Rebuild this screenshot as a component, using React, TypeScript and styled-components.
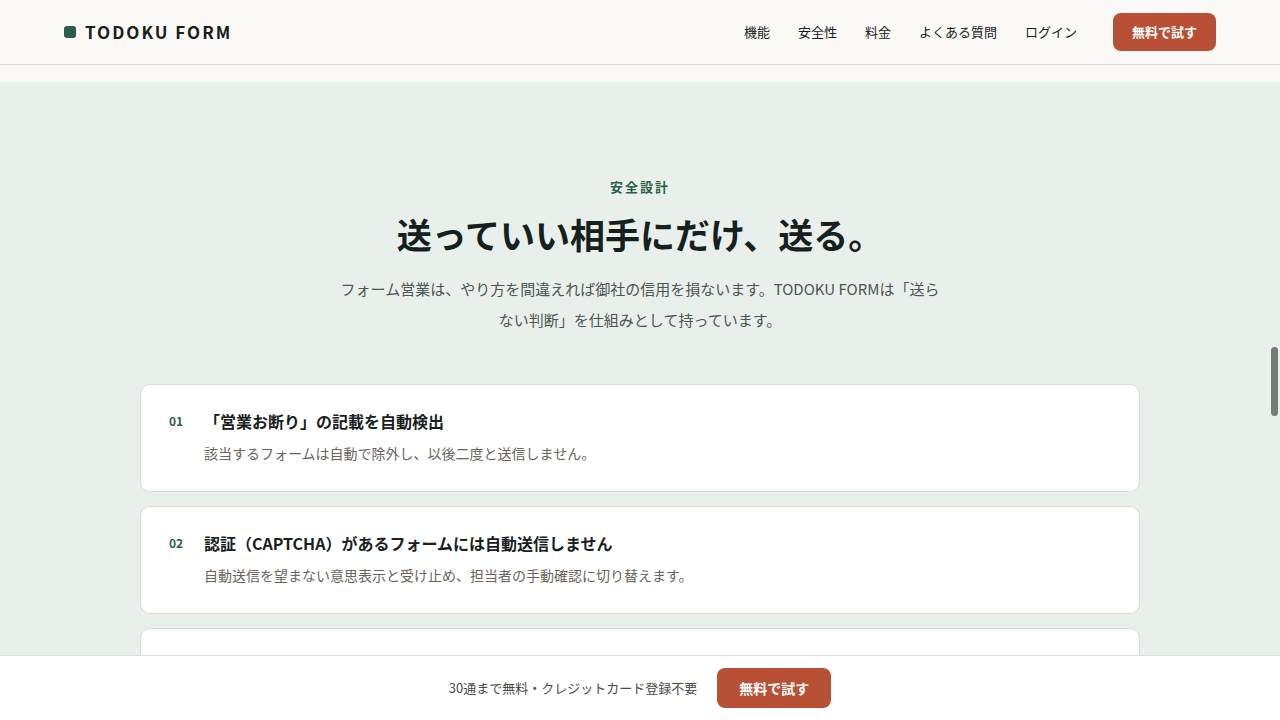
import React from "react";
import styled, { createGlobalStyle } from "styled-components";

const color = {
  paper: "#fbf9f5",
  mint: "#e9f0eb",
  white: "#ffffff",
  ink: "#16211d",
  green: "#2d5e4a",
  lead: "#4a5650",
  muted: "#6b645c",
  note: "#4b4a44",
  accent: "#b85035",
  line: "#dddeda",
  cardLine: "#d3dfd8",
};

const GlobalStyle = createGlobalStyle`
  *, *::before, *::after { box-sizing: border-box; }
  body {
    margin: 0;
    background: ${color.paper};
    color: ${color.ink};
    font-family: "Noto Sans CJK JP", sans-serif;
    font-size: 16px;
  }
  h1, h2, h3, p, ol, ul { margin: 0; padding: 0; }
  ol, ul { list-style: none; }
  a { color: inherit; text-decoration: none; }
`;

const Page = styled.div`
  display: grid;
  grid-template-rows: auto minmax(0, 1fr) auto;
  height: 100vh;
`;

const Header = styled.header`
  display: flex;
  align-items: center;
  justify-content: space-between;
  height: 65px;
  padding: 0 64px;
  border-bottom: 1px solid ${color.line};
`;

const Brand = styled.a`
  display: flex;
  align-items: center;
  gap: 9px;
  font-size: 17px;
  line-height: 24px;
  font-weight: 700;
  letter-spacing: 2px;
`;

const BrandMark = styled.span`
  width: 12px;
  height: 12px;
  border-radius: 3px;
  background: ${color.green};
`;

const HeaderRight = styled.div`
  display: flex;
  align-items: center;
  gap: 36px;
`;

const Nav = styled.nav`
  display: flex;
  gap: 28px;
  font-size: 13px;
  line-height: 24px;
`;

const TrialButton = styled.button<{ $large?: boolean }>`
  height: ${(p) => (p.$large ? 40 : 38)}px;
  padding: 0 ${(p) => (p.$large ? 22 : 19)}px;
  border: 0;
  border-radius: 8px;
  background: ${color.accent};
  color: ${color.white};
  font-family: inherit;
  font-size: ${(p) => (p.$large ? 14 : 13)}px;
  font-weight: 700;
  line-height: 24px;
  cursor: pointer;
`;

const Viewport = styled.div`
  position: relative;
  min-height: 0;
`;

const Main = styled.main`
  height: 100%;
  padding-top: 17px;
  overflow-y: auto;
  scrollbar-width: none;
`;

const ScrollThumb = styled.div`
  position: absolute;
  top: 282px;
  right: 2px;
  width: 7px;
  height: 69px;
  border-radius: 4px;
  background: #777a77;
`;

const Safety = styled.section`
  padding: 95px 64px;
  background: ${color.mint};
`;

const Intro = styled.div`
  display: flex;
  flex-direction: column;
  align-items: center;
  margin-bottom: 49px;
  text-align: center;
`;

const Eyebrow = styled.p`
  margin-bottom: 12px;
  color: ${color.green};
  font-size: 13px;
  font-weight: 700;
  line-height: 20px;
  letter-spacing: 2px;
`;

const Title = styled.h2`
  margin-bottom: 14px;
  font-size: 35px;
  font-weight: 700;
  line-height: 50px;
`;

const Lead = styled.p`
  max-width: 612px;
  color: ${color.lead};
  font-size: 15px;
  line-height: 31px;
`;

const CardList = styled.ol`
  display: grid;
  gap: 14px;
  max-width: 1000px;
  margin: 0 auto;
`;

const Card = styled.li`
  display: grid;
  grid-template-columns: 15px 1fr;
  column-gap: 20px;
  min-height: 108px;
  padding: 24px 28px 22px;
  border: 1px solid ${color.cardLine};
  border-radius: 10px;
  background: ${color.white};
`;

const CardNumber = styled.span`
  color: ${color.green};
  font-size: 12px;
  font-weight: 700;
  line-height: 24px;
`;

const CardBody = styled.div`
  display: grid;
  align-content: start;
  gap: 7px;
`;

const CardTitle = styled.h3`
  font-size: 16px;
  font-weight: 700;
  line-height: 24px;
`;

const CardText = styled.p`
  color: ${color.muted};
  font-size: 14px;
  line-height: 26px;
`;

const BottomBar = styled.footer`
  display: flex;
  align-items: center;
  justify-content: center;
  gap: 20px;
  height: 65px;
  border-top: 1px solid ${color.line};
  background: ${color.white};
`;

const BottomNote = styled.p`
  color: ${color.note};
  font-size: 13px;
  line-height: 24px;
`;

const links = [
  { href: "#features", label: "機能" },
  { href: "#safety", label: "安全性" },
  { href: "#pricing", label: "料金" },
  { href: "#faq", label: "よくある質問" },
  { href: "#login", label: "ログイン" },
];

const rules = [
  {
    number: "01",
    title: "「営業お断り」の記載を自動検出",
    text: "該当するフォームは自動で除外し、以後二度と送信しません。",
  },
  {
    number: "02",
    title: "認証（CAPTCHA）があるフォームには自動送信しません",
    text: "自動送信を望まない意思表示と受け止め、担当者の手動確認に切り替えます。",
  },
];

export default function App() {
  return (
    <>
      <GlobalStyle />
      <Page lang="ja">
        <Header>
          <Brand href="#top">
            <BrandMark />
            TODOKU FORM
          </Brand>
          <HeaderRight>
            <Nav>
              {links.map((link) => (
                <a key={link.href} href={link.href}>
                  {link.label}
                </a>
              ))}
            </Nav>
            <TrialButton type="button">無料で試す</TrialButton>
          </HeaderRight>
        </Header>
        <Viewport>
          <Main>
            <Safety id="safety">
              <Intro>
                <Eyebrow>安全設計</Eyebrow>
                <Title>送っていい相手にだけ、送る。</Title>
                <Lead>
                  フォーム営業は、やり方を間違えれば御社の信用を損ないます。TODOKU
                  FORMは「送らない判断」を仕組みとして持っています。
                </Lead>
              </Intro>
              <CardList>
                {rules.map((rule) => (
                  <Card key={rule.number}>
                    <CardNumber>{rule.number}</CardNumber>
                    <CardBody>
                      <CardTitle>{rule.title}</CardTitle>
                      <CardText>{rule.text}</CardText>
                    </CardBody>
                  </Card>
                ))}
                <Card />
              </CardList>
            </Safety>
          </Main>
          <ScrollThumb />
        </Viewport>
        <BottomBar>
          <BottomNote>30通まで無料・クレジットカード登録不要</BottomNote>
          <TrialButton type="button" $large>
            無料で試す
          </TrialButton>
        </BottomBar>
      </Page>
    </>
  );
}
